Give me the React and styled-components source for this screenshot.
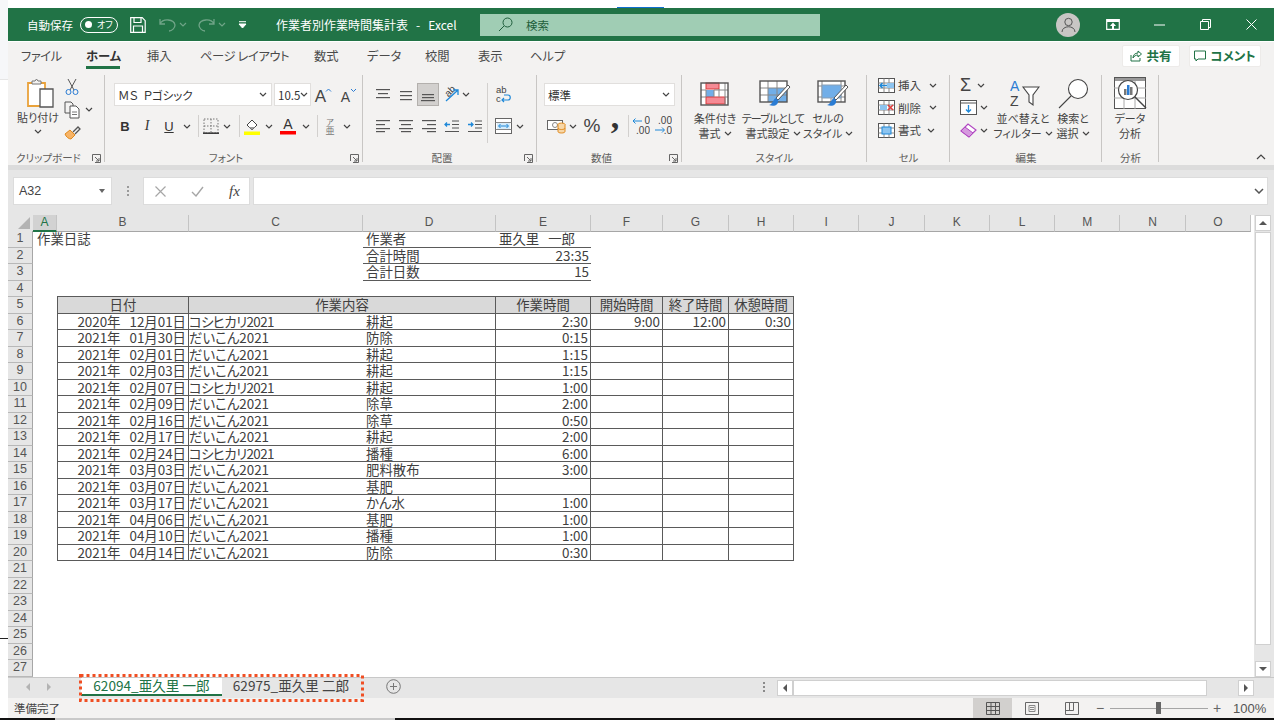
import React from "react";
import styled, { createGlobalStyle } from "styled-components";

const GlobalStyle = createGlobalStyle`
  html, body { margin: 0; padding: 0; background: #fff; overflow: hidden; }
  body {
    font-family: "Noto Sans CJK JP", "Liberation Sans", sans-serif;
    font-feature-settings: "palt";
    color: #444;
  }
  * { box-sizing: border-box; }
  svg { display: block; flex: none; }
`;

const GRID = "25px 24px 132px 174px 133px 95px 72px 66px 65px repeat(7, 65.300px)";
const COLS = ["A", "B", "C", "D", "E", "F", "G", "H", "I", "J", "K", "L", "M", "N", "O"];
const LINE = "#5a5a5a";

const Page = styled.div`
  width: 1274px;
  height: 720px;
  overflow: hidden;
`;
const Main = styled.div`
  display: flex;
  height: 718px;
`;
const Side = styled.div`
  width: 8px;
`;
const SideTop = styled.div`
  height: 80px;
  background: #f6f7f9;
  border-bottom: 1px solid #e6e6e6;
`;
const SideMark = styled.div`
  height: 1px;
  margin-top: 558px;
  background: #222;
`;
const Win = styled.div`
  width: 1266px;
  display: flex;
  flex-direction: column;
`;
const TopStrip = styled.div`
  height: 8px;
  display: flex;
  align-items: flex-end;
  padding-left: 609px;
`;
const BlueMark = styled.div`
  width: 47px;
  height: 1px;
  background: #0f6fd0;
`;

/* title bar */
const TitleBar = styled.div`
  height: 34px;
  background: #217346;
  border-bottom: 1px solid #fff;
  display: flex;
  align-items: center;
  color: #fff;
  font-size: 11.5px;
  padding-left: 19px;
`;
const AutoSave = styled.span`
  width: 46px;
  white-space: nowrap;
`;
const Toggle = styled.div`
  width: 38px;
  height: 16px;
  margin: 0 12px 0 7px;
  border: 1px solid #fff;
  border-radius: 8px;
  display: flex;
  align-items: center;
  padding-left: 4px;
  gap: 5px;
  font-size: 9px;
`;
const Knob = styled.i`
  width: 7px;
  height: 7px;
  border-radius: 50%;
  background: #fff;
`;
const Qat = styled.div`
  width: ${(p) => p.$w}px;
  margin-left: ${(p) => p.$ml || 0}px;
  display: flex;
  align-items: center;
  justify-content: center;
  gap: 3px;
  opacity: ${(p) => (p.$dim ? 0.35 : 1)};
`;
const DocTitle = styled.div`
  width: 204px;
  margin-left: 26px;
  white-space: pre;
  font-size: 12px;
`;
const SearchBox = styled.div`
  width: 340px;
  height: 22px;
  background: #a0cdb4;
  display: flex;
  align-items: center;
  padding-left: 18px;
  gap: 13px;
  color: #1f5f3c;
  font-size: 11.5px;
`;
const TitleRight = styled.div`
  margin-left: auto;
  display: flex;
  align-items: center;
`;
const Avatar = styled.div`
  width: 24px;
  height: 24px;
  margin-right: 10px;
  border-radius: 50%;
  background: #c8c6c4;
  display: flex;
  align-items: center;
  justify-content: center;
`;
const WinBtn = styled.div`
  width: 46px;
  height: 33px;
  display: flex;
  align-items: center;
  justify-content: center;
`;

/* ribbon tabs */
const TabRow = styled.div`
  height: 28px;
  background: #f3f2f1;
  display: flex;
  padding-left: 13px;
  gap: 27px;
`;
const RibbonTab = styled.div`
  width: ${(p) => p.$w}px;
  height: 24px;
  margin-top: 3px;
  line-height: 22px;
  font-size: 12.3px;
  letter-spacing: ${(p) => p.$ls || 0}px;
  white-space: nowrap;
  color: ${(p) => (p.$active ? "#333" : "#4a4a4a")};
  font-weight: ${(p) => (p.$active ? 700 : 400)};
  border-bottom: 3px solid ${(p) => (p.$active ? "#217346" : "transparent")};
`;
const TabActions = styled.div`
  margin-left: auto;
  margin-right: 13px;
  padding-top: 3px;
  display: flex;
  gap: 9px;
`;
const ActionBtn = styled.div`
  width: ${(p) => p.$w}px;
  height: 22px;
  background: #fff;
  border: 1px solid #edebe9;
  border-radius: 2px;
  display: flex;
  align-items: center;
  justify-content: center;
  gap: 4px;
  color: #217346;
  font-weight: 700;
  font-size: 12.5px;
  line-height: 18px;
`;

/* ribbon */
const Ribbon = styled.div`
  height: 95px;
  background: #f3f2f1;
  display: flex;
  padding-top: 5px;
`;
const Group = styled.div`
  position: relative;
  width: ${(p) => p.$w}px;
  height: 90px;
  display: flex;
  flex-direction: column;
  &::after {
    content: "";
    position: absolute;
    top: 0;
    right: 0;
    bottom: 3px;
    width: 1px;
    background: #c8c6c4;
  }
`;
const GroupBody = styled.div`
  height: 76px;
  display: flex;
  flex-direction: ${(p) => (p.$col ? "column" : "row")};
  padding-left: ${(p) => p.$pl || 0}px;
  padding-top: ${(p) => p.$pt || 0}px;
`;
const GroupLabel = styled.div`
  position: relative;
  height: 14px;
  line-height: 14px;
  text-align: center;
  font-size: 10.5px;
  color: #605e5c;
  white-space: nowrap;
  padding-right: ${(p) => (p.$launcher ? 16 : 0)}px;
`;
const LauncherSpot = styled.span`
  position: absolute;
  right: 4px;
  top: 3px;
`;
const CollapseSpot = styled.div`
  flex: 1;
  display: flex;
  justify-content: flex-end;
  align-items: flex-end;
  padding: 0 8px 5px 0;
`;
const PasteBtn = styled.div`
  width: 44px;
  margin-left: 8px;
  padding-top: 3px;
  display: flex;
  flex-direction: column;
  align-items: center;
  font-size: 11px;
  white-space: nowrap;
`;
const PasteIcon = styled.div`
  margin-left: 5px;
`;
const PasteLabel = styled.div`
  line-height: 15px;
  margin: 2px 0 4px;
`;
const ClipCol = styled.div`
  margin-left: 4px;
`;
const ClipRow = styled.div`
  height: 23px;
  display: flex;
  align-items: center;
  gap: 5px;
`;
const Row = styled.div`
  display: flex;
  align-items: center;
  height: ${(p) => p.$h || 22}px;
  margin-top: ${(p) => p.$mt || 0}px;
`;
const AlignBlock = styled.div`
  margin-left: ${(p) => p.$ml || 0}px;
`;
const Btn = styled.div`
  width: ${(p) => p.$w}px;
  height: ${(p) => p.$h || 22}px;
  margin-left: ${(p) => p.$ml || 0}px;
  display: flex;
  align-items: center;
  justify-content: center;
  flex: none;
  background: ${(p) => (p.$on ? "#d2d0ce" : "transparent")};
  outline: ${(p) => (p.$on ? "1px solid #b3b0ad" : "none")};
  outline-offset: -1px;
`;
const BoldLetter = styled.span`
  font-family: "Liberation Sans", sans-serif;
  font-weight: 700;
  font-size: 13px;
  color: #333;
`;
const ItalicLetter = styled.span`
  font-family: "Liberation Serif", serif;
  font-style: italic;
  font-size: 14px;
  color: #333;
`;
const UnderLetter = styled.span`
  font-family: "Liberation Sans", sans-serif;
  text-decoration: underline;
  font-size: 13px;
  color: #333;
`;
const BigGlyph = styled.span`
  font-family: "Liberation Sans", sans-serif;
  font-size: ${(p) => p.$s}px;
  color: #444;
`;
const CommaGlyph = styled.span`
  font-family: "Liberation Serif", serif;
  font-size: 34px;
  font-weight: 700;
  line-height: 22px;
  color: #333;
  padding-bottom: 18px;
`;
const Select = styled.div`
  width: ${(p) => p.$w}px;
  height: 23px;
  flex: none;
  margin-right: ${(p) => p.$mr || 0}px;
  background: #fff;
  border: 1px solid #e1dfdd;
  display: flex;
  align-items: center;
  justify-content: space-between;
  padding: 0 4px 0 3px;
  font-size: 11.5px;
  color: #333;
  white-space: pre;
  overflow: hidden;
`;
const VSep = styled.div`
  width: 1px;
  height: ${(p) => p.$h || 22}px;
  margin-left: ${(p) => p.$ml}px;
  background: #d2d0ce;
  flex: none;
`;
const BigBtn = styled.div`
  width: ${(p) => p.$w}px;
  flex: none;
  display: flex;
  flex-direction: column;
  align-items: center;
  padding-top: 1px;
  font-size: 11px;
  line-height: 15px;
  white-space: nowrap;
`;
const BigIcon = styled.div`
  height: 35px;
  margin-left: ${(p) => p.$shift || 0}px;
  display: flex;
  align-items: center;
  justify-content: center;
`;
const BigLine = styled.div`
  display: flex;
  align-items: center;
  gap: 3px;
  letter-spacing: ${(p) => p.$ls || 0}px;
`;
const CellAction = styled.div`
  width: 62px;
  height: 22.5px;
  display: flex;
  align-items: center;
  gap: 3px;
  font-size: 11.5px;
`;
const FarChev = styled.span`
  margin-left: ${(p) => (p.$near ? "3px" : "auto")};
  padding-right: 3px;
`;
const CellStack = styled.div`
  margin-top: -1px;
`;
const EditCol = styled.div`
  width: 32px;
  margin: -1px 0 0 10px;
`;
const EditRow = styled.div`
  height: 22.5px;
  display: flex;
  align-items: center;
  gap: ${(p) => p.$gap}px;
`;

/* formula bar */
const Strip = styled.div`
  height: 5px;
  background: #dcdcdc;
`;
const FormulaBar = styled.div`
  height: 45px;
  background: #e6e6e6;
  display: flex;
  padding: 7px 6px 10px 5px;
`;
const NameBox = styled.div`
  width: 99px;
  background: #fff;
  border: 1px solid #dcdcdc;
  display: flex;
  align-items: center;
  justify-content: space-between;
  padding: 0 6px 0 5px;
  font-family: "Liberation Sans", sans-serif;
  font-size: 12.5px;
  color: #444;
`;
const Grip = styled.div`
  width: ${(p) => p.$w}px;
  display: flex;
  flex-direction: column;
  align-items: center;
  justify-content: center;
  gap: 2px;
  i {
    width: 2px;
    height: 2px;
    background: #9a9a9a;
  }
`;
const FxBox = styled.div`
  width: 107px;
  background: #fff;
  border: 1px solid #dcdcdc;
  display: flex;
  align-items: center;
  padding-left: 11px;
  gap: 25px;
`;
const FxText = styled.span`
  font-family: "Liberation Serif", serif;
  font-style: italic;
  font-size: 15px;
  color: #444;
`;
const FormulaInput = styled.div`
  flex: 1;
  margin-left: 3px;
  background: #fff;
  border: 1px solid #dcdcdc;
  display: flex;
  align-items: center;
  justify-content: flex-end;
  padding-right: 3px;
`;

/* sheet */
const Sheet = styled.div`
  height: 462px;
  display: flex;
  background: #fff;
`;
const SheetMain = styled.div`
  width: 1246px;
  overflow: hidden;
`;
const GridRow = styled.div`
  display: grid;
  grid-template-columns: ${GRID};
  height: ${(p) => p.$h}px;
`;
const Corner = styled.div`
  background: #e6e6e6;
  border-bottom: 1px solid #a6a6a6;
  display: flex;
  align-items: flex-end;
  justify-content: flex-end;
  padding: 0 3px 2px 0;
`;
const ColHead = styled.div`
  background: ${(p) => (p.$on ? "#d2d2d2" : "#e6e6e6")};
  border-bottom: ${(p) => (p.$on ? "2px solid #217346" : "1px solid #a6a6a6")};
  border-right: 1px solid #c4c4c4;
  font-family: "Liberation Sans", sans-serif;
  font-size: 12px;
  line-height: 15px;
  text-align: center;
  color: ${(p) => (p.$on ? "#217346" : "#555")};
`;
const RowHead = styled.div`
  background: #e6e6e6;
  border-right: 1px solid #a6a6a6;
  border-bottom: 1px solid #b8b8b8;
  font-family: "Liberation Sans", sans-serif;
  font-size: 12.5px;
  line-height: 15.5px;
  text-align: center;
  color: #555;
`;
const Cell = styled.div`
  grid-column: ${(p) => p.$span || "auto"};
  padding: 0 2px;
  padding-left: ${(p) => p.$pl ?? 2}px;
  font-size: 13.4px;
  line-height: 15.5px;
  letter-spacing: ${(p) => p.$ls || 0}px;
  color: #404040;
  white-space: pre;
  text-align: ${(p) => p.$align || "left"};
  background: ${(p) => (p.$head ? "#d9d9d9" : "transparent")};
  border-right: ${(p) => (p.$right ? `1px solid ${LINE}` : "0")};
  border-bottom: ${(p) => (p.$under ? `1px solid ${LINE}` : "0")};
  border-left: ${(p) => (p.$left ? `1px solid ${LINE}` : "0")};
  border-top: ${(p) => (p.$top ? `1px solid ${LINE}` : "0")};
  margin-top: ${(p) => (p.$top ? "-1px" : "0")};
`;
const VScroll = styled.div`
  flex: 1;
  background: #e6e6e6;
  display: flex;
  flex-direction: column;
  padding-right: 3px;
  padding-left: 1px;
`;
const ScrollBtn = styled.div`
  height: 16px;
  width: ${(p) => p.$w || "auto"};
  flex: none;
  background: #fff;
  border: 1px solid #d0d0d0;
  display: flex;
  align-items: center;
  justify-content: center;
`;
const VThumb = styled.div`
  height: 413px;
  margin-top: 1px;
  background: #fff;
  border: 1px solid #d0d0d0;
`;
const VTrough = styled.div`
  flex: 1;
`;

/* sheet tabs */
const TabBar = styled.div`
  position: relative;
  height: 21px;
  background: #e6e6e6;
  border-top: 1px solid #c8c8c8;
  display: flex;
  align-items: flex-start;
  padding: 0 20px 0 73px;
`;
const SheetNav = styled.div`
  position: absolute;
  left: 15px;
  top: 4px;
  display: flex;
  gap: 11px;
  opacity: 0.35;
`;
const SheetTab = styled.div`
  width: ${(p) => p.$w}px;
  height: 18px;
  background: ${(p) => (p.$active ? "#fff" : "transparent")};
  border-bottom: ${(p) => (p.$active ? "2px solid #217346" : "0")};
  color: ${(p) => (p.$active ? "#217346" : "#444")};
  font-size: 13.6px;
  line-height: 15px;
  text-align: center;
  white-space: nowrap;
`;
const AddSheet = styled.div`
  margin: 1px 0 0 26px;
`;
const HGrip = styled(Grip)`
  margin: 4px 0 0 auto;
  i {
    background: #8a8a8a;
  }
`;
const HScroll = styled.div`
  width: 477px;
  margin-top: 2px;
  display: flex;
`;
const HThumb = styled.div`
  width: 414px;
  height: 16px;
  background: #fff;
  border: 1px solid #d0d0d0;
`;
const HTrough = styled.div`
  flex: 1;
`;
const Frame = styled.svg`
  position: absolute;
  left: 71px;
  top: -4px;
`;

/* status bar */
const StatusBar = styled.div`
  height: 20px;
  background: #f3f2f1;
  display: flex;
  align-items: center;
  padding-left: 6px;
  font-size: 11.5px;
  color: #444;
`;
const StatusRight = styled.div`
  margin-left: auto;
  height: 100%;
  display: flex;
  align-items: center;
`;
const ViewBtn = styled.div`
  width: ${(p) => p.$w}px;
  height: 100%;
  display: flex;
  align-items: center;
  justify-content: center;
  background: ${(p) => (p.$on ? "#d2d0ce" : "transparent")};
`;
const ZoomSign = styled.div`
  width: 18px;
  text-align: center;
  font-family: "Liberation Sans", sans-serif;
  font-size: 14px;
  color: #666;
`;
const Slider = styled.div`
  position: relative;
  width: 98px;
  height: 1px;
  margin-left: 1px;
  background: #a6a6a6;
`;
const SliderThumb = styled.i`
  position: absolute;
  left: 46px;
  top: -6px;
  width: 5px;
  height: 12px;
  background: #666;
`;
const ZoomPct = styled.div`
  width: 48px;
  padding-left: 7px;
  font-family: "Liberation Sans", sans-serif;
  font-size: 13px;
  color: #555;
`;
const BottomEdge = styled.div`
  height: 2px;
  background: #111;
  display: flex;
`;
const EdgeGap = styled.div`
  width: 340px;
  margin-left: 55px;
  background: #c9c9c9;
`;

/* icons */
const Chev = ({ c = "#444" }) => (
  <svg width="8" height="5" viewBox="0 0 8 5"><path d="M1 1l3 3 3-3" fill="none" stroke={c} strokeWidth="1.2" /></svg>
);
const Arrow = ({ dir }) => {
  const d = { up: "M1 5h8L5 1z", down: "M1 1h8L5 5z", left: "M5 1v8L1 5z", right: "M1 1v8l4-4z" }[dir];
  const box = dir === "up" || dir === "down" ? "0 -2 10 10" : "-2 0 10 10";
  return <svg width="10" height="10" viewBox={box}><path d={d} fill="#555" /></svg>;
};
const Launcher = () => (
  <svg width="9" height="9" viewBox="0 0 9 9"><path d="M.5 7V.5H8.500V8.500H3M3 3l4 4M7 4v3H4" fill="none" stroke="#666" /></svg>
);
const Lines = ({ rows }) => (
  <svg width="16" height="16" viewBox="0 0 16 16">
    {rows.map(([x, y, w], i) => <rect key={i} x={x} y={y} width={w} height="1.2" fill="#555" />)}
  </svg>
);
const Indent = ({ flip }) => (
  <svg width="16" height="14" viewBox="0 0 16 14">
    <path d="M8 2h7M8 5.500h7M8 9h7M1 12.500h14" stroke="#555" fill="none" />
    <path d={flip ? "M1 5.500h5M4 3.500l2 2-2 2" : "M6 5.500H1M3 3.500l-2 2 2 2"} stroke="#1e88d8" strokeWidth="1.300" fill="none" />
  </svg>
);
const Paste = () => (
  <svg width="30" height="30" viewBox="0 0 30 30">
    <path d="M2 5h17v23H2z" fill="#fff" stroke="#e9a23b" strokeWidth="1.800" />
    <path d="M6 6V3h3l1.500-2 1.500 2h3v3z" fill="#f3f2f1" stroke="#777" />
    <path d="M14 11h13v18H14z" fill="#fff" stroke="#555" strokeWidth="1.300" />
  </svg>
);
const Scissors = () => (
  <svg width="16" height="18" viewBox="0 0 16 18">
    <path d="M4 1l6 11M12 1L6 12" stroke="#555" fill="none" />
    <circle cx="4.500" cy="14" r="2.500" fill="none" stroke="#2b7cd3" />
    <circle cx="11.500" cy="14" r="2.500" fill="none" stroke="#2b7cd3" />
  </svg>
);
const Copy = () => (
  <svg width="16" height="18" viewBox="0 0 16 18">
    <path d="M1 1h6l2 2v9H1z" fill="#f3f2f1" stroke="#555" />
    <path d="M6 5h6l3 3v9H6z" fill="#fff" stroke="#555" />
    <path d="M8 11h5M8 13.500h5" stroke="#777" />
  </svg>
);
const Brush = () => (
  <svg width="17" height="15" viewBox="0 0 17 15">
    <path d="M1 9l5-4 5 5-4 4C5 14 2 12 1 9z" fill="#f7b467" stroke="#e08a1e" />
    <path d="M9 7l5-5 2 2-5 5" fill="none" stroke="#555" strokeWidth="1.300" />
  </svg>
);
const BorderIcon = () => (
  <svg width="16" height="16" viewBox="0 0 16 16">
    <path d="M1 1h14v14H1zM8 1v14M1 8h14" fill="none" stroke="#777" strokeDasharray="1.500 1.500" />
    <path d="M0 15.200h16" stroke="#333" strokeWidth="1.500" />
  </svg>
);
const FillIcon = () => (
  <svg width="16" height="17" viewBox="0 0 16 17">
    <path d="M3 7l5-5 5 5-5 5z" fill="#fff" stroke="#444" />
    <path d="M5 9h6l-3 3z" fill="#9a9a9a" />
    <rect x="0" y="13.500" width="16" height="3.500" fill="#ffff00" />
  </svg>
);
const FontColor = () => (
  <svg width="16" height="18" viewBox="0 0 16 18">
    <text x="8" y="12" textAnchor="middle" fontFamily="Liberation Sans" fontSize="14" fill="#333">A</text>
    <rect x="0" y="14" width="16" height="3.500" fill="#ff0000" />
  </svg>
);
const Phonetic = () => (
  <svg width="14" height="19" viewBox="0 0 14 19">
    <text x="7" y="8" textAnchor="middle" fontFamily="Noto Sans CJK JP" fontSize="8" fill="#777">ア</text>
    <text x="7" y="17" textAnchor="middle" fontFamily="Noto Sans CJK JP" fontSize="9" fill="#777">亜</text>
  </svg>
);
const GrowFont = ({ down }) => (
  <svg width="18" height="18" viewBox="0 0 18 18">
    <text x="6.500" y="16" textAnchor="middle" fontFamily="Liberation Sans" fontSize={down ? 14 : 17} fill="#444">A</text>
    <path d={down ? "M12 3l2.500 2.500L17 3" : "M12 5.500L14.500 3 17 5.500"} fill="none" stroke="#2b7cd3" />
  </svg>
);
const Orient = () => (
  <svg width="20" height="18" viewBox="0 0 20 18">
    <text x="6" y="12" fontFamily="Liberation Sans" fontSize="10" fill="#444" transform="rotate(-45 6 10)">ab</text>
    <path d="M5 15L17 4M12 4h5v5" fill="none" stroke="#1e88d8" strokeWidth="1.300" />
  </svg>
);
const Wrap = () => (
  <svg width="17" height="20" viewBox="0 0 17 20">
    <text x="1" y="8" fontFamily="Liberation Sans" fontSize="9.500" fill="#444">ab</text>
    <text x="1" y="17" fontFamily="Liberation Sans" fontSize="9.500" fill="#444">c</text>
    <path d="M7 15h6c3 0 3-5 0-5H9M9 13l-2 2 2 2" fill="none" stroke="#1e88d8" strokeWidth="1.200" />
  </svg>
);
const Merge = () => (
  <svg width="17" height="16" viewBox="0 0 17 16">
    <rect x=".5" y=".5" width="16" height="15" fill="#fff" stroke="#666" />
    <path d="M.5 4.500h16M.5 11.500h16" stroke="#888" />
    <rect x="2" y="5" width="13" height="6" fill="#d6ecfb" />
    <path d="M4 8h9M5.500 6l-2 2 2 2M11.500 6l2 2-2 2" fill="none" stroke="#1e88d8" />
  </svg>
);
const Money = () => (
  <svg width="19" height="16" viewBox="0 0 19 16">
    <rect x=".5" y="2.500" width="15" height="9" fill="#fff" stroke="#666" />
    <circle cx="8" cy="7" r="2.500" fill="none" stroke="#888" />
    <ellipse cx="14.500" cy="6.500" rx="3.500" ry="1.500" fill="#f7d7a8" stroke="#e08a1e" />
    <path d="M11 6.500v7c0 2 7 2 7 0v-7" fill="#f7d7a8" stroke="#e08a1e" />
    <path d="M11 10c0 2 7 2 7 0" fill="none" stroke="#e08a1e" />
  </svg>
);
const Decimal = ({ more }) => (
  <svg width="18" height="20" viewBox="0 0 18 20">
    {more ? (
      <>
        <text x="18" y="8" textAnchor="end" fontFamily="Liberation Sans" fontSize="10" fill="#444">.00</text>
        <text x="18" y="18" textAnchor="end" fontFamily="Liberation Sans" fontSize="10" fill="#444">.0</text>
        <path d="M1 14h9M8 11.500l2.500 2.500L8 16.500" fill="none" stroke="#1e88d8" />
      </>
    ) : (
      <>
        <text x="18" y="8" textAnchor="end" fontFamily="Liberation Sans" fontSize="10" fill="#444">0</text>
        <text x="18" y="18" textAnchor="end" fontFamily="Liberation Sans" fontSize="10" fill="#444">.00</text>
        <path d="M1 5h9M3.500 2.500L1 5l2.500 2.500" fill="none" stroke="#1e88d8" />
      </>
    )}
  </svg>
);
const CondFormat = () => (
  <svg width="30" height="24" viewBox="0 0 30 24">
    <rect x="1" y="1" width="27" height="22" fill="#fff" />
    <rect x="6" y="1" width="13" height="6" fill="#f58a94" stroke="#d83b3b" />
    <rect x="6" y="8" width="8" height="7" fill="#71aee8" />
    <rect x="6" y="15" width="19" height="7" fill="#f58a94" stroke="#d83b3b" />
    <path d="M6 8v7M14 8v7M19 7v8M25 1v22M1 8h5M14 8h14M1 15h5M25 15h3" stroke="#888" fill="none" />
    <rect x="1" y="1" width="27" height="22" fill="none" stroke="#555" strokeWidth="1.400" />
  </svg>
);
const PaintBrush = () => (
  <>
    <path d="M31 7L19 20l-2-2L29 5z" fill="#fff" stroke="#555" />
    <path d="M17 18c-3 1-3 6-7 7 5 2 10 0 9-5z" fill="#2b7cd3" />
  </>
);
const TableFormat = () => (
  <svg width="32" height="28" viewBox="0 0 32 28">
    <rect x="1" y="1" width="27" height="21" fill="#fff" />
    <rect x="9" y="8" width="19" height="14" fill="#71aee8" />
    <path d="M1 8h27M1 15h27M9 1v21M18 1v21" stroke="#888" fill="none" />
    <rect x="1" y="1" width="27" height="21" fill="none" stroke="#555" strokeWidth="1.400" />
    <PaintBrush />
  </svg>
);
const CellStyle = () => (
  <svg width="32" height="28" viewBox="0 0 32 28">
    <rect x="1" y="1" width="27" height="21" fill="#fff" />
    <path d="M1 6h4M24 6h4M1 17h4M24 17h4M5 1v21M24 1v21M14 17v5" stroke="#888" fill="none" />
    <rect x="5" y="5" width="19" height="13" fill="#71aee8" stroke="#8a9fb5" />
    <rect x="1" y="1" width="27" height="21" fill="none" stroke="#555" strokeWidth="1.400" />
    <PaintBrush />
  </svg>
);
const CellsIcon = ({ kind }) => (
  <svg width="17" height="15" viewBox="0 0 17 15">
    <rect x=".5" y=".5" width="16" height="14" fill="#fff" stroke="#555" />
    <path d="M.5 5h16M.5 10h16M6 .5v14M11 .5v14" stroke="#888" fill="none" />
    {kind === "ins" && <rect x="9" y="5" width="7" height="5" fill="#8dc4ef" />}
    {kind === "ins" && <path d="M9 7.500H2M4.500 5L2 7.500 4.500 10" stroke="#1e88d8" strokeWidth="1.500" fill="none" />}
    {kind === "del" && <rect x="2" y="5" width="7" height="5" fill="#8dc4ef" />}
    {kind === "del" && <path d="M10 5l5 5M15 5l-5 5" stroke="#e03c3c" strokeWidth="1.500" fill="none" />}
    {kind === "fmt" && <rect x="4" y="4" width="9" height="7" fill="#8dc4ef" stroke="#1e88d8" />}
  </svg>
);
const FillDown = () => (
  <svg width="17" height="15" viewBox="0 0 17 15">
    <rect x=".5" y=".5" width="16" height="14" fill="#fff" stroke="#555" />
    <path d="M.5 3h16" stroke="#555" />
    <path d="M8.500 5v7M6 9.500l2.500 2.500L11 9.500" stroke="#1e88d8" strokeWidth="1.300" fill="none" />
  </svg>
);
const Eraser = () => (
  <svg width="17" height="15" viewBox="0 0 17 15">
    <path d="M1 8l7-7 8 6-7 7z" fill="#fff" stroke="#b146c2" strokeWidth="1.200" />
    <path d="M1 8l4-4 8 6-4 4z" fill="#d59ade" stroke="#b146c2" />
  </svg>
);
const SortFilter = () => (
  <svg width="30" height="29" viewBox="0 0 30 29">
    <text x="0" y="12" fontFamily="Liberation Sans" fontSize="14" fill="#2b7cd3">A</text>
    <text x="0" y="27" fontFamily="Liberation Sans" fontSize="14" fill="#444">Z</text>
    <path d="M13 8h16l-6 8v10l-4-3v-7z" fill="#fff" stroke="#444" strokeWidth="1.100" />
  </svg>
);
const SearchBig = () => (
  <svg width="31" height="31" viewBox="0 0 31 31">
    <circle cx="20" cy="11" r="9.500" fill="#fff" stroke="#444" strokeWidth="1.100" />
    <path d="M13 18L1 30" stroke="#444" strokeWidth="1.100" />
  </svg>
);
const Analysis = () => (
  <svg width="33" height="33" viewBox="0 0 33 33">
    <rect x=".5" y=".5" width="31" height="31" fill="#fff" stroke="#555" />
    <rect x="1" y="1" width="30" height="3" fill="#999" />
    <path d="M0 11h32M0 21h32M10 4v28M21 4v28" stroke="#aaa" />
    <circle cx="14" cy="13" r="9.500" fill="#fff" stroke="#444" strokeWidth="1.200" />
    <path d="M21 20l11 11" stroke="#444" strokeWidth="1.400" />
    <rect x="10" y="12" width="2.500" height="6" fill="#777" />
    <rect x="13" y="8" width="2.500" height="10" fill="#2b7cd3" />
    <rect x="16" y="10" width="2.500" height="8" fill="#777" />
  </svg>
);

const headers = [["作業時間", "E"], ["開始時間", "F"], ["終了時間", "G"], ["休憩時間", "H"]];
const rows = [
  ["2020年   12月01日", "コシヒカリ2021", "耕起", "2:30", "9:00", "12:00", "0:30"],
  ["2021年   01月30日", "だいこん2021", "防除", "0:15"],
  ["2021年   02月01日", "だいこん2021", "耕起", "1:15"],
  ["2021年   02月03日", "だいこん2021", "耕起", "1:15"],
  ["2021年   02月07日", "コシヒカリ2021", "耕起", "1:00"],
  ["2021年   02月09日", "だいこん2021", "除草", "2:00"],
  ["2021年   02月16日", "だいこん2021", "除草", "0:50"],
  ["2021年   02月17日", "だいこん2021", "耕起", "2:00"],
  ["2021年   02月24日", "コシヒカリ2021", "播種", "6:00"],
  ["2021年   03月03日", "だいこん2021", "肥料散布", "3:00"],
  ["2021年   03月07日", "だいこん2021", "基肥", ""],
  ["2021年   03月17日", "だいこん2021", "かん水", "1:00"],
  ["2021年   04月06日", "だいこん2021", "基肥", "1:00"],
  ["2021年   04月10日", "だいこん2021", "播種", "1:00"],
  ["2021年   04月14日", "だいこん2021", "防除", "0:30"],
];

const rowCells = (n) => {
  if (n === 1) return [<Cell key="a" $pl={4}>作業日誌</Cell>, <Cell key="b" />, <Cell key="c" />, <Cell key="d" $under $pl={3}>作業者</Cell>, <Cell key="e" $under $pl={3}>{"亜久里   一郎"}</Cell>];
  if (n === 2) return [<Cell key="a" />, <Cell key="b" />, <Cell key="c" />, <Cell key="d" $under $pl={3}>合計時間</Cell>, <Cell key="e" $under $align="right">23:35</Cell>];
  if (n === 3) return [<Cell key="a" />, <Cell key="b" />, <Cell key="c" />, <Cell key="d" $under $pl={3}>合計日数</Cell>, <Cell key="e" $under $align="right">15</Cell>];
  if (n === 5) {
    return [
      <Cell key="a" />,
      <Cell key="b" $head $top $left $right $under $align="center">日付</Cell>,
      <Cell key="c" $head $top $right $under $span="span 2" $align="center">作業内容</Cell>,
      ...headers.map(([t, k]) => <Cell key={k} $head $top $right $under $align="center">{t}</Cell>),
    ];
  }
  if (n >= 6 && n <= 20) {
    const r = rows[n - 6];
    return [
      <Cell key="a" />,
      <Cell key="b" $left $right $under $align="right">{r[0]}</Cell>,
      <Cell key="c" $under $pl={0} $ls={r[1].startsWith("コ") ? -0.6 : 0}>{r[1]}</Cell>,
      <Cell key="d" $right $under $pl={3}>{r[2]}</Cell>,
      <Cell key="e" $right $under $align="right">{r[3]}</Cell>,
      <Cell key="f" $right $under $align="right">{r[4]}</Cell>,
      <Cell key="g" $right $under $align="right">{r[5]}</Cell>,
      <Cell key="h" $right $under $align="right">{r[6]}</Cell>,
    ];
  }
  return null;
};

const App = () => (
  <Page>
    <GlobalStyle />
    <Main>
      <Side>
        <SideTop />
        <SideMark />
      </Side>
      <Win>
        <TopStrip><BlueMark /></TopStrip>
        <TitleBar>
          <AutoSave>自動保存</AutoSave>
          <Toggle><Knob />オフ</Toggle>
          <Qat $w={16}>
            <svg width="16" height="16" viewBox="0 0 16 16"><path d="M.7.7h11.500l3 3v11.600H.7zM4 .7v4.800h7V.7M3.500 15.300V9h9v6.300" fill="none" stroke="#fff" strokeWidth="1.200" /></svg>
          </Qat>
          <Qat $w={36} $ml={9} $dim>
            <svg width="17" height="14" viewBox="0 0 17 14"><path d="M1 1v5h5M1 6c3-6 14-5 15 1 0 3-3 6-6 6" fill="none" stroke="#fff" strokeWidth="1.300" /></svg>
            <Chev c="#fff" />
          </Qat>
          <Qat $w={36} $ml={3} $dim>
            <svg width="17" height="14" viewBox="0 0 17 14"><path d="M16 1v5h-5M16 6C13 0 2 1 1 7c0 3 3 6 6 6" fill="none" stroke="#fff" strokeWidth="1.300" /></svg>
            <Chev c="#fff" />
          </Qat>
          <Qat $w={16} $ml={4}>
            <svg width="9" height="8" viewBox="0 0 9 8"><path d="M1 .7h7M1 3l3.500 4L8 3z" fill="#fff" stroke="#fff" /></svg>
          </Qat>
          <DocTitle>{"作業者別作業時間集計表   -   Excel"}</DocTitle>
          <SearchBox>
            <svg width="15" height="15" viewBox="0 0 15 15"><circle cx="9.500" cy="5.500" r="4.500" fill="none" stroke="#1f5f3c" /><path d="M6 9l-5 5" stroke="#1f5f3c" /></svg>
            検索
          </SearchBox>
          <TitleRight>
            <Avatar>
              <svg width="15" height="15" viewBox="0 0 15 15"><circle cx="7.500" cy="5" r="3.700" fill="none" stroke="#555" /><path d="M1 15c0-7 13-7 13 0" fill="none" stroke="#555" /></svg>
            </Avatar>
            <WinBtn><svg width="14" height="11" viewBox="0 0 14 11"><path d="M.7.7h12.600v9.600H.7z" fill="none" stroke="#fff" strokeWidth="1.200" /><path d="M1 1h12v2H1zM7 3.500L4 7h2v3h2V7h2z" fill="#fff" /></svg></WinBtn>
            <WinBtn><svg width="11" height="2" viewBox="0 0 11 2"><path d="M0 1h11" stroke="#fff" /></svg></WinBtn>
            <WinBtn><svg width="11" height="11" viewBox="0 0 11 11"><path d="M.5 2.500h8v8h-8zM2.500 2.500v-2h8v8h-2" fill="none" stroke="#fff" /></svg></WinBtn>
            <WinBtn><svg width="11" height="11" viewBox="0 0 11 11"><path d="M.5.500l10 10M10.500.500l-10 10" stroke="#fff" /></svg></WinBtn>
          </TitleRight>
        </TitleBar>

        <TabRow>
          <RibbonTab $w={38} $ls={-0.5}>ファイル</RibbonTab>
          <RibbonTab $w={34} $active>ホーム</RibbonTab>
          <RibbonTab $w={26}>挿入</RibbonTab>
          <RibbonTab $w={87} $ls={-0.4}>ページ レイアウト</RibbonTab>
          <RibbonTab $w={26}>数式</RibbonTab>
          <RibbonTab $w={31}>データ</RibbonTab>
          <RibbonTab $w={26}>校閲</RibbonTab>
          <RibbonTab $w={25}>表示</RibbonTab>
          <RibbonTab $w={32}>ヘルプ</RibbonTab>
          <TabActions>
            <ActionBtn $w={58}>
              <svg width="12" height="12" viewBox="0 0 12 12"><path d="M1 5v6h9V8M3 8c0-3 2-5 5-5V1l3.500 3L8 7V5C6 5 4 6 3 8z" fill="none" stroke="#217346" /></svg>
              共有
            </ActionBtn>
            <ActionBtn $w={72}>
              <svg width="12" height="12" viewBox="0 0 12 12"><path d="M.5 1h11v8H4l-2 2V9H.5z" fill="none" stroke="#217346" /></svg>
              コメント
            </ActionBtn>
          </TabActions>
        </TabRow>

        <Ribbon>
          <Group $w={97}>
            <GroupBody>
              <PasteBtn>
                <PasteIcon><Paste /></PasteIcon>
                <PasteLabel>貼り付け</PasteLabel>
                <Chev />
              </PasteBtn>
              <ClipCol>
                <ClipRow><Scissors /></ClipRow>
                <ClipRow><Copy /><Chev /></ClipRow>
                <ClipRow><Brush /></ClipRow>
              </ClipCol>
            </GroupBody>
            <GroupLabel $launcher>クリップボード<LauncherSpot><Launcher /></LauncherSpot></GroupLabel>
          </Group>

          <Group $w={258}>
            <GroupBody $col $pl={9} $pt={8}>
              <Row $h={23}>
                <Select $w={158} $mr={2}>{"ＭＳ  Ｐゴシック"}<Chev /></Select>
                <Select $w={37}>10.5<Chev /></Select>
                <Btn $w={24}><GrowFont /></Btn>
                <Btn $w={26}><GrowFont down /></Btn>
              </Row>
              <Row $mt={9}>
                <Btn $w={22}><BoldLetter>B</BoldLetter></Btn>
                <Btn $w={22}><ItalicLetter>I</ItalicLetter></Btn>
                <Btn $w={22}><UnderLetter>U</UnderLetter></Btn>
                <Btn $w={14}><Chev /></Btn>
                <VSep $ml={4} />
                <Btn $w={16} $ml={4}><BorderIcon /></Btn>
                <Btn $w={16}><Chev /></Btn>
                <VSep $ml={4} />
                <Btn $w={16} $ml={4}><FillIcon /></Btn>
                <Btn $w={18}><Chev /></Btn>
                <Btn $w={20}><FontColor /></Btn>
                <Btn $w={16}><Chev /></Btn>
                <VSep $ml={3} />
                <Btn $w={24}><Phonetic /></Btn>
                <Btn $w={10}><Chev /></Btn>
              </Row>
            </GroupBody>
            <GroupLabel $launcher>フォント<LauncherSpot><Launcher /></LauncherSpot></GroupLabel>
          </Group>

          <Group $w={174}>
            <GroupBody $pl={8} $pt={8}>
              <AlignBlock>
                <Row $h={23}>
                  <Btn $w={23}><Lines rows={[[1, 2, 14], [3, 6, 10], [1, 10, 14]]} /></Btn>
                  <Btn $w={23}><Lines rows={[[2, 4, 12], [2, 8, 12], [2, 12, 12]]} /></Btn>
                  <Btn $w={22} $h={23} $on><Lines rows={[[2, 7, 12], [2, 10, 12], [1, 13, 14]]} /></Btn>
                  <Btn $w={23}><Orient /></Btn>
                  <Btn $w={8}><Chev /></Btn>
                </Row>
                <Row $mt={9}>
                  <Btn $w={23}><Lines rows={[[1, 2, 14], [1, 6, 9], [1, 10, 14], [1, 13, 9]]} /></Btn>
                  <Btn $w={23}><Lines rows={[[1, 2, 14], [3, 6, 10], [1, 10, 14], [3, 13, 10]]} /></Btn>
                  <Btn $w={23}><Lines rows={[[1, 2, 14], [6, 6, 9], [1, 10, 14], [6, 13, 9]]} /></Btn>
                  <Btn $w={23}><Indent /></Btn>
                  <Btn $w={23}><Indent flip /></Btn>
                </Row>
              </AlignBlock>
              <VSep $ml={1} $h={60} />
              <AlignBlock $ml={5}>
                <Row $h={23}><Btn $w={20}><Wrap /></Btn></Row>
                <Row $mt={9}><Btn $w={20}><Merge /></Btn><Btn $w={14}><Chev /></Btn></Row>
              </AlignBlock>
            </GroupBody>
            <GroupLabel $launcher>配置<LauncherSpot><Launcher /></LauncherSpot></GroupLabel>
          </Group>

          <Group $w={145}>
            <GroupBody $col $pl={7} $pt={8}>
              <Row $h={23}><Select $w={131}>標準<Chev /></Select></Row>
              <Row $mt={9}>
                <Btn $w={24}><Money /></Btn>
                <Btn $w={10}><Chev /></Btn>
                <Btn $w={28}><BigGlyph $s={19}>%</BigGlyph></Btn>
                <Btn $w={18}><CommaGlyph>,</CommaGlyph></Btn>
                <VSep $ml={4} />
                <Btn $w={20} $ml={2}><Decimal /></Btn>
                <Btn $w={23}><Decimal more /></Btn>
              </Row>
            </GroupBody>
            <GroupLabel $launcher>数値<LauncherSpot><Launcher /></LauncherSpot></GroupLabel>
          </Group>

          <Group $w={185}>
            <GroupBody $pl={2}>
              <BigBtn $w={62}><BigIcon><CondFormat /></BigIcon><div>条件付き</div><BigLine>書式<Chev /></BigLine></BigBtn>
              <BigBtn $w={54}><BigIcon $shift={3}><TableFormat /></BigIcon><BigLine $ls={-0.9}>テーブルとして</BigLine><BigLine>書式設定<Chev /></BigLine></BigBtn>
              <BigBtn $w={56}><BigIcon $shift={10}><CellStyle /></BigIcon><div>セルの</div><BigLine>スタイル<Chev /></BigLine></BigBtn>
            </GroupBody>
            <GroupLabel>スタイル</GroupLabel>
          </Group>

          <Group $w={83}>
            <GroupBody $col $pl={11}>
              <CellStack>
                <CellAction><CellsIcon kind="ins" />挿入<FarChev><Chev /></FarChev></CellAction>
                <CellAction><CellsIcon kind="del" />削除<FarChev><Chev /></FarChev></CellAction>
                <CellAction><CellsIcon kind="fmt" />書式<FarChev $near><Chev /></FarChev></CellAction>
              </CellStack>
            </GroupBody>
            <GroupLabel>セル</GroupLabel>
          </Group>

          <Group $w={152}>
            <GroupBody>
              <EditCol>
                <EditRow $gap={6}><BigGlyph $s={18}>Σ</BigGlyph><Chev /></EditRow>
                <EditRow $gap={3}><FillDown /><Chev /></EditRow>
                <EditRow $gap={3}><Eraser /><Chev /></EditRow>
              </EditCol>
              <BigBtn $w={62}><BigIcon $shift={4}><SortFilter /></BigIcon><div>並べ替えと</div><BigLine>フィルター<Chev /></BigLine></BigBtn>
              <BigBtn $w={38}><BigIcon><SearchBig /></BigIcon><div>検索と</div><BigLine>選択<Chev /></BigLine></BigBtn>
            </GroupBody>
            <GroupLabel>編集</GroupLabel>
          </Group>

          <Group $w={57}>
            <GroupBody>
              <BigBtn $w={56}><BigIcon><Analysis /></BigIcon><div>データ</div><div>分析</div></BigBtn>
            </GroupBody>
            <GroupLabel>分析</GroupLabel>
          </Group>

          <CollapseSpot>
            <svg width="10" height="6" viewBox="0 0 10 6"><path d="M1 5l4-4 4 4" fill="none" stroke="#444" strokeWidth="1.200" /></svg>
          </CollapseSpot>
        </Ribbon>

        <Strip />
        <FormulaBar>
          <NameBox>A32<svg width="6" height="4" viewBox="0 0 6 4"><path d="M0 0h6L3 4z" fill="#666" /></svg></NameBox>
          <Grip $w={31}><i /><i /><i /></Grip>
          <FxBox>
            <svg width="11" height="11" viewBox="0 0 11 11"><path d="M.5.500l10 10M10.500.500l-10 10" stroke="#a6a6a6" strokeWidth="1.200" /></svg>
            <svg width="13" height="11" viewBox="0 0 13 11"><path d="M1 6l4 4 7-9" fill="none" stroke="#a6a6a6" strokeWidth="1.400" /></svg>
            <FxText>fx</FxText>
          </FxBox>
          <FormulaInput>
            <svg width="10" height="6" viewBox="0 0 10 6"><path d="M1 1l4 4 4-4" fill="none" stroke="#555" strokeWidth="1.500" /></svg>
          </FormulaInput>
        </FormulaBar>

        <Sheet>
          <SheetMain>
            <GridRow $h={16}>
              <Corner><svg width="12" height="12" viewBox="0 0 12 12"><path d="M12 0v12H0z" fill="#b3b3b3" /></svg></Corner>
              {COLS.map((c, i) => <ColHead key={c} $on={i === 0}>{c}</ColHead>)}
            </GridRow>
            {Array.from({ length: 27 }, (_, i) => (
              <GridRow key={i} $h={16.5}>
                <RowHead>{i + 1}</RowHead>
                {rowCells(i + 1)}
              </GridRow>
            ))}
          </SheetMain>
          <VScroll>
            <ScrollBtn><Arrow dir="up" /></ScrollBtn>
            <VThumb />
            <VTrough />
            <ScrollBtn><Arrow dir="down" /></ScrollBtn>
          </VScroll>
        </Sheet>

        <TabBar>
          <SheetNav><Arrow dir="left" /><Arrow dir="right" /></SheetNav>
          <SheetTab $w={141} $active>62094_亜久里 一郎</SheetTab>
          <SheetTab $w={138}>62975_亜久里 二郎</SheetTab>
          <AddSheet>
            <svg width="15" height="15" viewBox="0 0 15 15"><circle cx="7.500" cy="7.500" r="6.800" fill="none" stroke="#777" /><path d="M7.500 4v7M4 7.500h7" stroke="#777" /></svg>
          </AddSheet>
          <HGrip $w={26}><i /><i /><i /></HGrip>
          <HScroll>
            <ScrollBtn $w="16px"><Arrow dir="left" /></ScrollBtn>
            <HThumb />
            <HTrough />
            <ScrollBtn $w="16px"><Arrow dir="right" /></ScrollBtn>
          </HScroll>
          <Frame width="285" height="28" viewBox="0 0 285 28">
            <rect x="1.500" y="1.500" width="282" height="25" fill="none" stroke="#f04e23" strokeWidth="3" strokeDasharray="3 3" />
          </Frame>
        </TabBar>

        <StatusBar>
          準備完了
          <StatusRight>
            <ViewBtn $w={39} $on>
              <svg width="14" height="13" viewBox="0 0 14 13"><path d="M.5.500h13v12H.5zM.5 4.500h13M.5 8.500h13M5 .5v12M9.500.5v12" fill="none" stroke="#555" /></svg>
            </ViewBtn>
            <ViewBtn $w={40}>
              <svg width="14" height="13" viewBox="0 0 14 13"><path d="M.5.500h13v12H.5z" fill="none" stroke="#666" /><path d="M4 3.500h6v6H4zM5 5.500h4M5 7.500h4" fill="none" stroke="#888" /></svg>
            </ViewBtn>
            <ViewBtn $w={39}>
              <svg width="14" height="13" viewBox="0 0 14 13"><path d="M.5.500h13v12H.5zM.5 8.500h8V.5M4.500.5v8" fill="none" stroke="#666" /></svg>
            </ViewBtn>
            <ZoomSign>−</ZoomSign>
            <Slider><SliderThumb /></Slider>
            <ZoomSign>+</ZoomSign>
            <ZoomPct>100%</ZoomPct>
          </StatusRight>
        </StatusBar>
      </Win>
    </Main>
    <BottomEdge><EdgeGap /></BottomEdge>
  </Page>
);

export default App;
